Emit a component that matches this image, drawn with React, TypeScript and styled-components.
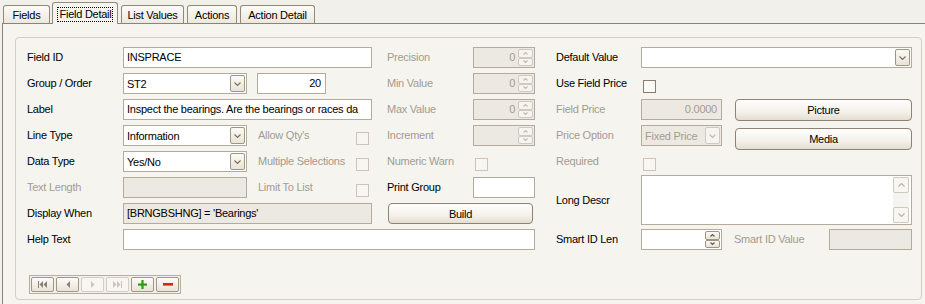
import React from 'react';
import styled, { createGlobalStyle, css } from 'styled-components';

const GlobalStyle = createGlobalStyle`
  html, body { margin: 0; padding: 0; background: #f2f0ea; }
  body {
    font-family: "Liberation Sans", Arial, sans-serif;
    font-size: 11px;
    letter-spacing: -0.25px;
    color: #000;
  }
  * { box-sizing: border-box; }
`;

const C = {
  panel: '#f5f4ef',
  frame: '#8d8374',
  group: '#d4cec3',
  input: '#b5ab9c',
  disabledBg: '#ece9e2',
  disabledText: '#a39c90',
  btnBorder: '#8e8272',
  ctlBorder: '#a09483',
  ctlBorderOff: '#d0c9bd',
};

type Place = { $col: string; $row: string };
const placed = css<Place>`
  grid-column: ${(p) => p.$col};
  grid-row: ${(p) => p.$row};
`;

const Screen = styled.div`
  width: 925px;
  height: 304px;
  overflow: hidden;
  background: #f2f0ea;
`;

const TabStrip = styled.div`
  display: flex;
  align-items: flex-end;
  gap: 3px;
  height: 23px;
  padding-left: 3px;
`;

const Tab = styled.div<{ $active?: boolean; $w: number }>`
  position: relative;
  z-index: ${(p) => (p.$active ? 1 : 0)};
  width: ${(p) => p.$w}px;
  height: ${(p) => (p.$active ? 22 : 18)}px;
  margin-bottom: ${(p) => (p.$active ? -1 : 0)}px;
  margin-left: ${(p) => (p.$active ? -1 : 0)}px;
  padding-top: ${(p) => (p.$active ? 1 : 0)}px;
  display: flex;
  align-items: center;
  justify-content: center;
  border: 1px solid #938979;
  border-bottom: none;
  border-radius: 3px 3px 0 0;
  background: ${(p) => (p.$active ? C.panel : 'linear-gradient(#fcfbf9, #ece8de)')};
  white-space: nowrap;
`;

const FocusText = styled.span`
  outline: 1px dotted #000;
  outline-offset: 0;
  padding: 1px 0 1px 1px;
  line-height: 11px;
`;

const Panel = styled.div`
  width: 930px;
  height: 281px;
  margin-left: 2px;
  border-top: 1px solid ${C.frame};
  border-left: 1px solid ${C.frame};
  background: ${C.panel};
  padding: 13px 0 0 12px;
`;

const GroupBox = styled.div`
  width: 907px;
  border: 1px solid ${C.group};
  border-radius: 4px;
  padding: 9px 0 5px 11px;
`;

const FormGrid = styled.div`
  display: grid;
  grid-template-columns: 96px 124px 10px 99px 16px 15px 86px 62px 21px 85px 81px 13px 177px;
  grid-template-rows: repeat(7, 26px) 21px;
`;

const FieldLabel = styled.div<Place & { $off?: boolean; $shift?: number; $top?: number }>`
  ${placed};
  align-self: start;
  height: 21px;
  line-height: 21px;
  white-space: nowrap;
  margin-left: ${(p) => p.$shift ?? 0}px;
  margin-top: ${(p) => p.$top ?? 0}px;
  color: ${(p) => (p.$off ? C.disabledText : '#000')};
`;

const TextBox = styled.div<
  Place & { $off?: boolean; $dim?: boolean; $right?: boolean; $w?: number; $end?: boolean }
>`
  ${placed};
  height: 21px;
  width: ${(p) => (p.$w ? `${p.$w}px` : 'auto')};
  justify-self: ${(p) => (p.$w ? (p.$end ? 'end' : 'start') : 'stretch')};
  border: 1px solid ${C.input};
  background: ${(p) => (p.$off ? C.disabledBg : '#fff')};
  color: ${(p) => (p.$dim ? C.disabledText : '#000')};
  padding: 0 4px 0 3px;
  line-height: 19px;
  white-space: nowrap;
  overflow: hidden;
  text-align: ${(p) => (p.$right ? 'right' : 'left')};
`;

const ComboFrame = styled.div<Place & { $off?: boolean }>`
  ${placed};
  height: 21px;
  display: flex;
  align-items: center;
  padding: 1px 1px 1px 3px;
  border: 1px solid ${C.input};
  background: ${(p) => (p.$off ? C.disabledBg : '#fff')};
  color: ${(p) => (p.$off ? C.disabledText : '#000')};
`;

const ComboText = styled.div`
  flex: 1;
  overflow: hidden;
  white-space: nowrap;
`;

const DropButton = styled.div<{ $off?: boolean }>`
  width: 15px;
  height: 17px;
  display: flex;
  align-items: center;
  justify-content: center;
  border: 1px solid ${(p) => (p.$off ? C.ctlBorderOff : C.ctlBorder)};
  border-radius: 2px;
  background: ${(p) => (p.$off ? '#f6f4f0' : 'linear-gradient(#fbfaf7, #e9e3d8)')};
`;

const SpinFrame = styled.div<Place & { $off?: boolean }>`
  ${placed};
  height: 21px;
  display: flex;
  align-items: stretch;
  padding: 1px 1px 1px 3px;
  border: 1px solid ${C.input};
  background: ${(p) => (p.$off ? C.disabledBg : '#fff')};
  color: ${(p) => (p.$off ? C.disabledText : '#000')};
`;

const SpinText = styled.div`
  flex: 1;
  text-align: right;
  line-height: 17px;
  padding-right: 3px;
`;

const SpinButtons = styled.div`
  width: 15px;
  display: flex;
  flex-direction: column;
`;

const SpinButton = styled.div<{ $off?: boolean }>`
  flex: 1;
  display: flex;
  align-items: center;
  justify-content: center;
  border: 1px solid ${(p) => (p.$off ? C.ctlBorderOff : C.ctlBorder)};
  border-radius: 2px;
  background: ${(p) => (p.$off ? '#f6f4f0' : 'linear-gradient(#fbfaf7, #e9e3d8)')};
`;

const CheckBox = styled.div<Place & { $off?: boolean; $shift?: number }>`
  ${placed};
  align-self: center;
  justify-self: start;
  width: 13px;
  height: 13px;
  margin-left: ${(p) => p.$shift ?? 0}px;
  border: 1px solid ${(p) => (p.$off ? '#cbc4b8' : '#8a7d6b')};
  background: ${(p) => (p.$off ? '#f7f6f2' : '#fbfaf8')};
`;

const PushButton = styled.button<Place & { $top?: number; $h?: number; $mx?: string }>`
  ${placed};
  align-self: start;
  height: ${(p) => p.$h ?? 21}px;
  margin: ${(p) => p.$top ?? 0}px ${(p) => p.$mx ?? '0'};
  border: 1px solid ${C.btnBorder};
  border-radius: 4px;
  background: linear-gradient(#fefefd, #f4f1eb 60%, #e4ded1);
  font: inherit;
  letter-spacing: inherit;
  color: #000;
  padding: 0;
`;

const MemoFrame = styled.div<Place>`
  ${placed};
  margin-top: -2px;
  height: 50px;
  display: flex;
  border: 1px solid ${C.input};
  background: #fff;
`;

const MemoText = styled.div`
  flex: 1;
`;

const ScrollBar = styled.div`
  width: 16px;
  margin: 1px 2px 1px 0;
  display: flex;
  flex-direction: column;
  background: #f5f4f0;
`;

const ScrollButton = styled.div`
  width: 16px;
  height: 16px;
  display: flex;
  align-items: center;
  justify-content: center;
  border: 1px solid ${C.ctlBorderOff};
  border-radius: 2px;
  background: #f7f6f3;
`;

const ScrollTrack = styled.div`
  flex: 1;
`;

const NavBar = styled.div`
  display: inline-flex;
  gap: 2px;
  margin: 25px 0 0 2px;
  padding: 1px;
  border: 1px solid #b8ae9f;
  background: #f2f0ea;
`;

const NavButton = styled.div<{ $off?: boolean }>`
  width: 23px;
  height: 15px;
  display: flex;
  align-items: center;
  justify-content: center;
  border: 1px solid ${(p) => (p.$off ? '#d3cdc2' : '#a29685')};
  border-radius: 2px;
  background: ${(p) => (p.$off ? '#f7f6f3' : 'linear-gradient(#fcfbf9, #e8e3d8)')};
`;

const Chevron = ({ up, color, w = 7 }: { up?: boolean; color: string; w?: number }) => {
  const h = Math.ceil(w / 2);
  const pts = up
    ? `0.5,${h - 0.5} ${w / 2},0.5 ${w - 0.5},${h - 0.5}`
    : `0.5,0.5 ${w / 2},${h - 0.5} ${w - 0.5},0.5`;
  return (
    <svg width={w} height={h} viewBox={`0 0 ${w} ${h}`}>
      <polyline points={pts} fill="none" stroke={color} strokeWidth="1.1" />
    </svg>
  );
};

const Combo = ({ value, off, col, row }: { value: string; off?: boolean; col: string; row: string }) => (
  <ComboFrame $col={col} $row={row} $off={off}>
    <ComboText>{value}</ComboText>
    <DropButton $off={off}>
      <Chevron color={off ? '#c2baad' : '#7a6f60'} />
    </DropButton>
  </ComboFrame>
);

const Spinner = ({ value, off, col, row }: { value: string; off?: boolean; col: string; row: string }) => (
  <SpinFrame $col={col} $row={row} $off={off}>
    <SpinText>{value}</SpinText>
    <SpinButtons>
      <SpinButton $off={off}>
        <Chevron up w={5} color={off ? '#c2baad' : '#5e5446'} />
      </SpinButton>
      <SpinButton $off={off}>
        <Chevron w={5} color={off ? '#c2baad' : '#5e5446'} />
      </SpinButton>
    </SpinButtons>
  </SpinFrame>
);

const NavIcon = ({ kind, off }: { kind: 'first' | 'prev' | 'next' | 'last'; off?: boolean }) => {
  const c = off ? '#cbc5ba' : '#8c8172';
  if (kind === 'first')
    return (
      <svg width="9" height="7" viewBox="0 0 9 7">
        <rect x="0" y="0" width="1" height="7" fill={c} />
        <polygon points="5,0 1.5,3.5 5,7" fill={c} />
        <polygon points="9,0 5.5,3.5 9,7" fill={c} />
      </svg>
    );
  if (kind === 'prev')
    return (
      <svg width="4" height="7" viewBox="0 0 4 7">
        <polygon points="4,0 0.5,3.5 4,7" fill={c} />
      </svg>
    );
  if (kind === 'next')
    return (
      <svg width="4" height="7" viewBox="0 0 4 7">
        <polygon points="0,0 3.5,3.5 0,7" fill={c} />
      </svg>
    );
  return (
    <svg width="9" height="7" viewBox="0 0 9 7">
      <polygon points="0,0 3.5,3.5 0,7" fill={c} />
      <polygon points="4,0 7.5,3.5 4,7" fill={c} />
      <rect x="8" y="0" width="1" height="7" fill={c} />
    </svg>
  );
};

const PlusIcon = () => (
  <svg width="9" height="9" viewBox="0 0 9 9">
    <rect x="0" y="3.5" width="9" height="2.2" fill="#2c9a12" />
    <rect x="3.4" y="0" width="2.2" height="9" fill="#2c9a12" />
  </svg>
);

const MinusIcon = () => (
  <svg width="10" height="3" viewBox="0 0 10 3">
    <rect x="0" y="0" width="10" height="2.6" fill="#dc2018" />
  </svg>
);

export default function App() {
  return (
    <Screen>
      <GlobalStyle />
      <TabStrip>
        <Tab $w={47}>Fields</Tab>
        <Tab $w={66} $active>
          <FocusText>Field Detail</FocusText>
        </Tab>
        <Tab $w={63}>List Values</Tab>
        <Tab $w={50}>Actions</Tab>
        <Tab $w={75}>Action Detail</Tab>
      </TabStrip>
      <Panel>
        <GroupBox>
          <FormGrid>
            {/* Row 1 */}
            <FieldLabel $col="1" $row="1">Field ID</FieldLabel>
            <TextBox $col="2 / 6" $row="1">INSPRACE</TextBox>
            <FieldLabel $col="7" $row="1" $off>Precision</FieldLabel>
            <Spinner col="8" row="1" value="0" off />
            <FieldLabel $col="10" $row="1">Default Value</FieldLabel>
            <Combo col="11 / 14" row="1" value="" />

            {/* Row 2 */}
            <FieldLabel $col="1" $row="2">Group / Order</FieldLabel>
            <Combo col="2" row="2" value="ST2" />
            <TextBox $col="4" $row="2" $w={69} $right>20</TextBox>
            <FieldLabel $col="7" $row="2" $off>Min Value</FieldLabel>
            <Spinner col="8" row="2" value="0" off />
            <FieldLabel $col="10" $row="2">Use Field Price</FieldLabel>
            <CheckBox $col="11" $row="2" $shift={2} />

            {/* Row 3 */}
            <FieldLabel $col="1" $row="3">Label</FieldLabel>
            <TextBox $col="2 / 6" $row="3">
              Inspect the bearings. Are the bearings or races da
            </TextBox>
            <FieldLabel $col="7" $row="3" $off>Max Value</FieldLabel>
            <Spinner col="8" row="3" value="0" off />
            <FieldLabel $col="10" $row="3" $off>Field Price</FieldLabel>
            <TextBox $col="11" $row="3" $off $dim $right>0.0000</TextBox>
            <PushButton $col="13" $row="3" $h={22}>Picture</PushButton>

            {/* Row 4 */}
            <FieldLabel $col="1" $row="4">Line Type</FieldLabel>
            <Combo col="2" row="4" value="Information" />
            <FieldLabel $col="4" $row="4" $off $shift={1}>Allow Qty's</FieldLabel>
            <CheckBox $col="5" $row="4" $off />
            <FieldLabel $col="7" $row="4" $off>Increment</FieldLabel>
            <Spinner col="8" row="4" value="" off />
            <FieldLabel $col="10" $row="4" $off>Price Option</FieldLabel>
            <Combo col="11" row="4" value="Fixed Price" off />
            <PushButton $col="13" $row="4" $top={3} $h={22}>Media</PushButton>

            {/* Row 5 */}
            <FieldLabel $col="1" $row="5">Data Type</FieldLabel>
            <Combo col="2" row="5" value="Yes/No" />
            <FieldLabel $col="4" $row="5" $off $shift={1}>Multiple Selections</FieldLabel>
            <CheckBox $col="5" $row="5" $off />
            <FieldLabel $col="7" $row="5" $off>Numeric Warn</FieldLabel>
            <CheckBox $col="8" $row="5" $off $shift={2} />
            <FieldLabel $col="10" $row="5" $off>Required</FieldLabel>
            <CheckBox $col="11" $row="5" $off $shift={2} />

            {/* Row 6 */}
            <FieldLabel $col="1" $row="6" $off>Text Length</FieldLabel>
            <TextBox $col="2" $row="6" $off />
            <FieldLabel $col="4" $row="6" $off $shift={1}>Limit To List</FieldLabel>
            <CheckBox $col="5" $row="6" $off />
            <FieldLabel $col="7" $row="6">Print Group</FieldLabel>
            <TextBox $col="8" $row="6" />
            <FieldLabel $col="10" $row="6 / 8" $top={13}>Long Descr</FieldLabel>
            <MemoFrame $col="11 / 14" $row="6 / 8">
              <MemoText />
              <ScrollBar>
                <ScrollButton>
                  <Chevron up color="#b8b0a2" />
                </ScrollButton>
                <ScrollTrack />
                <ScrollButton>
                  <Chevron color="#b8b0a2" />
                </ScrollButton>
              </ScrollBar>
            </MemoFrame>

            {/* Row 7 */}
            <FieldLabel $col="1" $row="7">Display When</FieldLabel>
            <TextBox $col="2 / 6" $row="7" $off>
              [BRNGBSHNG] = 'Bearings'
            </TextBox>
            <PushButton $col="7 / 9" $row="7" $mx="2px 0 1px">Build</PushButton>

            {/* Row 8 */}
            <FieldLabel $col="1" $row="8">Help Text</FieldLabel>
            <TextBox $col="2 / 9" $row="8" />
            <FieldLabel $col="10" $row="8">Smart ID Len</FieldLabel>
            <Spinner col="11" row="8" value="" />
            <FieldLabel $col="13" $row="8" $off $shift={-1}>Smart ID Value</FieldLabel>
            <TextBox $col="13" $row="8" $off $w={83} $end />
          </FormGrid>
          <NavBar>
            <NavButton><NavIcon kind="first" /></NavButton>
            <NavButton><NavIcon kind="prev" /></NavButton>
            <NavButton $off><NavIcon kind="next" off /></NavButton>
            <NavButton $off><NavIcon kind="last" off /></NavButton>
            <NavButton><PlusIcon /></NavButton>
            <NavButton><MinusIcon /></NavButton>
          </NavBar>
        </GroupBox>
      </Panel>
    </Screen>
  );
}
